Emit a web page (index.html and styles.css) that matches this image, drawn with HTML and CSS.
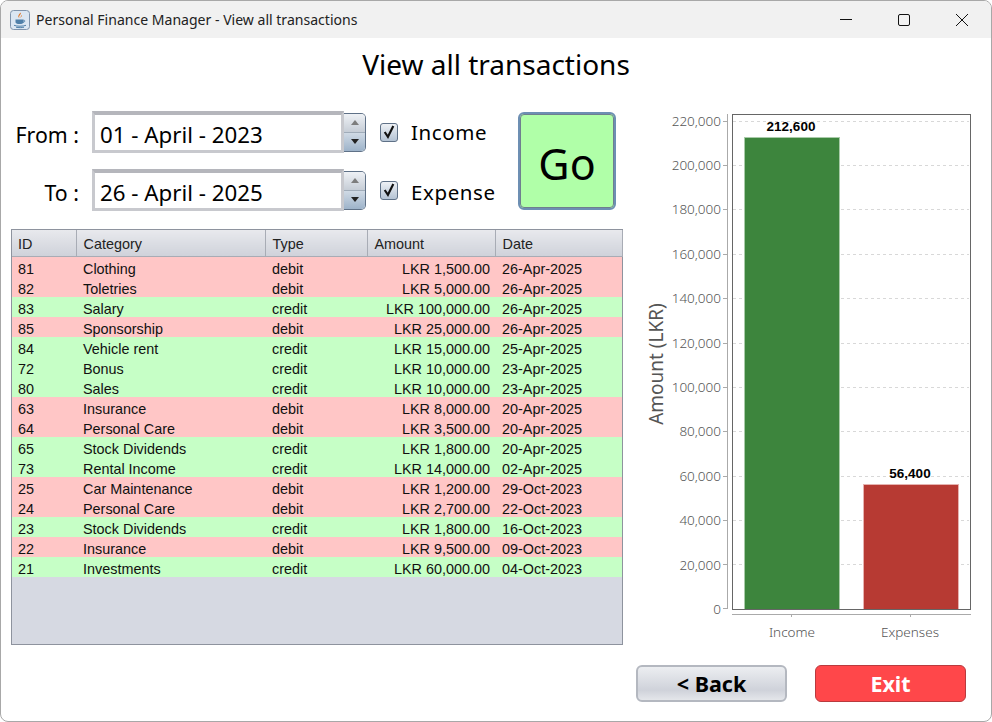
FILE: index.html
```html
<!DOCTYPE html>
<html lang="en">
<head>
    <meta charset="UTF-8">
    <title>Personal Finance Manager - View all transactions</title>
    <link rel="stylesheet" href="styles.css">
</head>
<body>
<div class="window">
    <div class="titlebar">
        <svg class="app-icon" width="20" height="20" viewBox="0 0 20 20">
            <rect x="0.5" y="0.5" width="19" height="19" rx="3" fill="#dbe6f2" stroke="#7f93ab"/>
            <path d="M10.5 2.5c1.5 2-2.5 3-1 5.5-2.500-1.500-.5-3.500 1-5.500zM12 5c.5 1.500-2 2-.8 3.500C9.800 7.500 11 6 12 5z" fill="#e2711d"/>
            <path d="M5.500 9.500h8v2.500c0 1.500-1.500 2-4 2s-4-.5-4-2z" fill="#4f7fa8"/>
            <path d="M13.500 10.300c1.800-.3 1.800 1.800-.5 2" fill="none" stroke="#4f7fa8"/>
            <path d="M4 15.300c3 1.200 9 1.200 12 0M6 17.200c2.500.6 6 .6 8 0" fill="none" stroke="#4f7fa8"/>
        </svg>
        <span class="window-title">Personal Finance Manager - View all transactions</span>
        <div class="window-controls">
            <svg width="12" height="12" viewBox="0 0 12 12"><path d="M0 5.500h12" stroke="#111" fill="none"/></svg>
            <svg width="12" height="12" viewBox="0 0 12 12"><rect x="0.500" y="0.500" width="11" height="11" rx="1.500" stroke="#111" fill="none"/></svg>
            <svg width="12" height="12" viewBox="0 0 12 12"><path d="M0 0l12 12M12 0L0 12" stroke="#111" fill="none"/></svg>
        </div>
    </div>

    <h1 class="page-title">View all transactions</h1>

    <div class="main">
        <div class="left-col">
            <form class="filters">
                <label class="field-label">From :</label>
                <div class="spinner">
                    <div class="spinner-value">01 - April - 2023</div>
                    <div class="spinner-btns"><span class="spin-up"></span><span class="spin-down"></span></div>
                </div>
                <div class="check-row">
                    <span class="checkbox"><svg width="14" height="14" viewBox="0 0 13 13"><path d="M2.500 6.500l3 4.500 5-10" stroke="#111" stroke-width="2" fill="none"/></svg></span>
                    <span class="check-label">Income</span>
                </div>
                <button type="button" class="go-btn">Go</button>

                <label class="field-label">To :</label>
                <div class="spinner">
                    <div class="spinner-value">26 - April - 2025</div>
                    <div class="spinner-btns"><span class="spin-up"></span><span class="spin-down"></span></div>
                </div>
                <div class="check-row check-row-low">
                    <span class="checkbox"><svg width="14" height="14" viewBox="0 0 13 13"><path d="M2.500 6.500l3 4.500 5-10" stroke="#111" stroke-width="2" fill="none"/></svg></span>
                    <span class="check-label">Expense</span>
                </div>
            </form>

            <div class="table-wrap">
                <table class="tx-table">
                    <colgroup>
                        <col class="col-id"><col class="col-category"><col class="col-type"><col class="col-amount"><col class="col-date">
                    </colgroup>
                    <thead>
                        <tr><th>ID</th><th>Category</th><th>Type</th><th>Amount</th><th>Date</th></tr>
                    </thead>
                    <tbody>
                        <tr class="debit"><td>81</td><td>Clothing</td><td>debit</td><td class="amount">LKR 1,500.00</td><td>26-Apr-2025</td></tr>
                        <tr class="debit"><td>82</td><td>Toletries</td><td>debit</td><td class="amount">LKR 5,000.00</td><td>26-Apr-2025</td></tr>
                        <tr class="credit"><td>83</td><td>Salary</td><td>credit</td><td class="amount">LKR 100,000.00</td><td>26-Apr-2025</td></tr>
                        <tr class="debit"><td>85</td><td>Sponsorship</td><td>debit</td><td class="amount">LKR 25,000.00</td><td>26-Apr-2025</td></tr>
                        <tr class="credit"><td>84</td><td>Vehicle rent</td><td>credit</td><td class="amount">LKR 15,000.00</td><td>25-Apr-2025</td></tr>
                        <tr class="credit"><td>72</td><td>Bonus</td><td>credit</td><td class="amount">LKR 10,000.00</td><td>23-Apr-2025</td></tr>
                        <tr class="credit"><td>80</td><td>Sales</td><td>credit</td><td class="amount">LKR 10,000.00</td><td>23-Apr-2025</td></tr>
                        <tr class="debit"><td>63</td><td>Insurance</td><td>debit</td><td class="amount">LKR 8,000.00</td><td>20-Apr-2025</td></tr>
                        <tr class="debit"><td>64</td><td>Personal Care</td><td>debit</td><td class="amount">LKR 3,500.00</td><td>20-Apr-2025</td></tr>
                        <tr class="credit"><td>65</td><td>Stock Dividends</td><td>credit</td><td class="amount">LKR 1,800.00</td><td>20-Apr-2025</td></tr>
                        <tr class="credit"><td>73</td><td>Rental Income</td><td>credit</td><td class="amount">LKR 14,000.00</td><td>02-Apr-2025</td></tr>
                        <tr class="debit"><td>25</td><td>Car Maintenance</td><td>debit</td><td class="amount">LKR 1,200.00</td><td>29-Oct-2023</td></tr>
                        <tr class="debit"><td>24</td><td>Personal Care</td><td>debit</td><td class="amount">LKR 2,700.00</td><td>22-Oct-2023</td></tr>
                        <tr class="credit"><td>23</td><td>Stock Dividends</td><td>credit</td><td class="amount">LKR 1,800.00</td><td>16-Oct-2023</td></tr>
                        <tr class="debit"><td>22</td><td>Insurance</td><td>debit</td><td class="amount">LKR 9,500.00</td><td>09-Oct-2023</td></tr>
                        <tr class="credit"><td>21</td><td>Investments</td><td>credit</td><td class="amount">LKR 60,000.00</td><td>04-Oct-2023</td></tr>
                    </tbody>
                </table>
            </div>
        </div>

        <svg class="chart" width="352" height="550" viewBox="640 100 352 550">
            <g class="grid-lines">
                <path d="M733 121.500H969M733 165.500H969M733 209.500H969M733 254.500H969M733 298.500H969M733 343.500H969M733 387.500H969M733 431.500H969M733 476.500H969M733 520.500H969M733 564.500H969"/>
            </g>
            <rect class="bar-income" x="744.500" y="137.500" width="95" height="472"/>
            <rect class="bar-expense" x="863.500" y="484.500" width="95" height="125"/>
            <rect class="plot-box" x="732.500" y="114.500" width="238" height="495"/>
            <path class="axis" d="M727.500 114V609M723 121.500h4M723 165.500h4M723 209.500h4M723 254.500h4M723 298.500h4M723 343.500h4M723 387.500h4M723 431.500h4M723 476.500h4M723 520.500h4M723 564.500h4M723 608.500h4M732 614.500H971M791.500 614v3M910.500 614v3"/>
            <g class="tick-labels">
                <text x="721" y="126">220,000</text>
                <text x="721" y="170">200,000</text>
                <text x="721" y="214">180,000</text>
                <text x="721" y="259">160,000</text>
                <text x="721" y="303">140,000</text>
                <text x="721" y="348">120,000</text>
                <text x="721" y="392">100,000</text>
                <text x="721" y="436">80,000</text>
                <text x="721" y="481">60,000</text>
                <text x="721" y="525">40,000</text>
                <text x="721" y="570">20,000</text>
                <text x="721" y="614">0</text>
            </g>
            <text class="cat-label" x="792" y="637">Income</text>
            <text class="cat-label" x="910" y="637">Expenses</text>
            <text class="bar-value" x="791" y="131">212,600</text>
            <text class="bar-value" x="910" y="478">56,400</text>
            <text class="axis-title" transform="translate(663 364) rotate(-90)">Amount (LKR)</text>
        </svg>
    </div>

    <div class="footer-btns">
        <button type="button" class="back-btn">&lt; Back</button>
        <button type="button" class="exit-btn">Exit</button>
    </div>
</div>
</body>
</html>
```

FILE: styles.css
```css
html, body {
    margin: 0;
    padding: 0;
    background-color: #fff;
}

.window {
    box-sizing: border-box;
    width: 992px;
    height: 722px;
    border: 1px solid #a8a8a8;
    border-radius: 8px;
    overflow: hidden;
    font-family: "Noto Sans", sans-serif;
    color: #000;
}

.titlebar {
    height: 37px;
    background-color: #f1f1f1;
    display: flex;
    align-items: center;
    padding-left: 9px;
}

.app-icon {
    margin-right: 6px;
}

.window-title {
    font-size: 14.050px;
    color: #222;
}

.window-controls {
    margin-left: auto;
    display: flex;
    gap: 46px;
    padding-right: 23px;
}

.page-title {
    margin: 0;
    height: 62px;
    line-height: 52px;
    text-align: center;
    font-size: 28px;
    font-weight: 400;
}

.main {
    display: flex;
    height: 550px;
    padding-left: 10px;
}

.left-col {
    width: 612px;
    padding-top: 11px;
}

.chart {
    margin-left: 17px;
    flex: none;
}

/* filter form */
.filters {
    display: grid;
    grid-template-columns: 68px 287px 152px 98px;
    grid-template-rows: 42px 42px;
    row-gap: 16px;
    margin-bottom: 18px;
}

.field-label {
    font-size: 21.300px;
    text-align: right;
    line-height: 47px;
}

.spinner {
    display: flex;
    margin-left: 13px;
    width: 274px;
}

.spinner-value {
    box-sizing: border-box;
    width: 252px;
    height: 42px;
    border: 3px solid #c8c9ce;
    border-top: 4px solid #b5b6bc;
    padding-left: 5px;
    font-size: 22.300px;
    line-height: 39px;
    background-color: #fff;
}

.spinner-btns {
    width: 22px;
    height: 39px;
    margin-top: 2px;
    display: flex;
    flex-direction: column;
    border: 1px solid #5f7187;
    border-left: none;
    border-radius: 0 5px 5px 0;
    overflow: hidden;
    box-sizing: border-box;
}

.spin-up,
.spin-down {
    flex: 1;
    position: relative;
}

.spin-up {
    background: linear-gradient(#eef1f5, #c6cdd6);
    border-bottom: 1px solid #a0acb9;
}

.spin-down {
    background: linear-gradient(#d0dae5, #9db3ca);
}

.spin-up::after,
.spin-down::after {
    content: "";
    position: absolute;
    left: 7px;
    top: 6px;
    border-left: 4px solid transparent;
    border-right: 4px solid transparent;
}

.spin-up::after {
    border-bottom: 5px solid #7d7d7d;
}

.spin-down::after {
    border-top: 5px solid #222;
}

.check-row {
    display: flex;
    align-items: center;
    padding-left: 14px;
}

.checkbox {
    box-sizing: border-box;
    width: 18px;
    height: 19px;
    border: 1px solid #5f7187;
    border-radius: 3px;
    background: linear-gradient(#eef1f5, #b4c3d4);
    display: flex;
    align-items: center;
    justify-content: center;
}

.check-label {
    margin-left: 13px;
    font-size: 20.500px;
    letter-spacing: 0.600px;
}

.check-row-low .check-label {
    padding-top: 3px;
}

.go-btn {
    grid-column: 4;
    grid-row: 1 / span 2;
    margin: 1px 0;
    box-sizing: border-box;
    border: 2px solid #6d8fb3;
    border-radius: 6px;
    outline: 1px solid #6f7f8e;
    outline-offset: -3px;
    background-color: #b0ffa8;
    font-family: "Noto Sans", sans-serif;
    font-size: 43px;
    color: #000;
    padding: 5px 0 0;
}

/* table */
.table-wrap {
    box-sizing: border-box;
    height: 416px;
    border: 1px solid #8e939e;
    background-color: #d6d9e2;
}

.tx-table {
    border-collapse: collapse;
    table-layout: fixed;
    width: 610px;
    font-family: "Liberation Sans", Arial, sans-serif;
    font-size: 14.400px;
}

.col-id { width: 64px; }
.col-category { width: 189px; }
.col-type { width: 102px; }
.col-amount { width: 128px; }
.col-date { width: 127px; }

.tx-table th {
    height: 26px;
    padding: 2px 0 0 7px;
    text-align: left;
    font-weight: 400;
    color: #222;
    background: linear-gradient(#e8e9ed, #cfd2da);
    border-right: 1px solid #a8acb5;
    border-bottom: 1px solid #a8acb5;
    box-sizing: border-box;
}

.tx-table td {
    height: 20px;
    padding: 4px 0 0 7px;
    line-height: 16px;
    box-sizing: border-box;
    color: #111;
}

.tx-table th:first-child,
.tx-table td:first-child {
    padding-left: 6px;
}

.tx-table td.amount {
    text-align: right;
    padding-right: 5px;
    padding-left: 0;
}

.debit { background-color: #ffc6c6; }
.credit { background-color: #c6ffc6; }

/* chart */
.grid-lines path {
    stroke: #d8d8d8;
    stroke-dasharray: 3 3;
    fill: none;
}

.bar-income {
    fill: #3d853d;
    stroke: #a9cba9;
}

.bar-expense {
    fill: #b73a33;
    stroke: #e6b3b0;
}

.plot-box {
    fill: none;
    stroke: #666;
}

.axis {
    fill: none;
    stroke: #aaa;
}

.tick-labels text {
    font-size: 13.500px;
    font-weight: 300;
    fill: #555;
    text-anchor: end;
}

.cat-label {
    font-size: 13.500px;
    font-weight: 300;
    fill: #555;
    text-anchor: middle;
}

.bar-value {
    font-family: "Liberation Sans", Arial, sans-serif;
    font-size: 13.500px;
    font-weight: 700;
    fill: #000;
    text-anchor: middle;
}

.axis-title {
    font-size: 19px;
    fill: #555;
    text-anchor: middle;
}

/* bottom buttons */
.footer-btns {
    display: flex;
    justify-content: flex-end;
    gap: 28px;
    padding: 15px 25px 0 0;
}

.footer-btns button {
    box-sizing: border-box;
    width: 151px;
    height: 37px;
    border-radius: 6px;
    font-family: "Noto Sans", sans-serif;
    font-size: 21.500px;
    font-weight: 700;
    padding: 0;
}

.back-btn {
    border: 2px solid #b4b8c0;
    background: linear-gradient(#eceef1, #cfd2da 70%, #e4e6ea);
    color: #000;
}

.exit-btn {
    border: 1px solid #b93a3e;
    background-color: #ff474a;
    color: #fff;
}
```
